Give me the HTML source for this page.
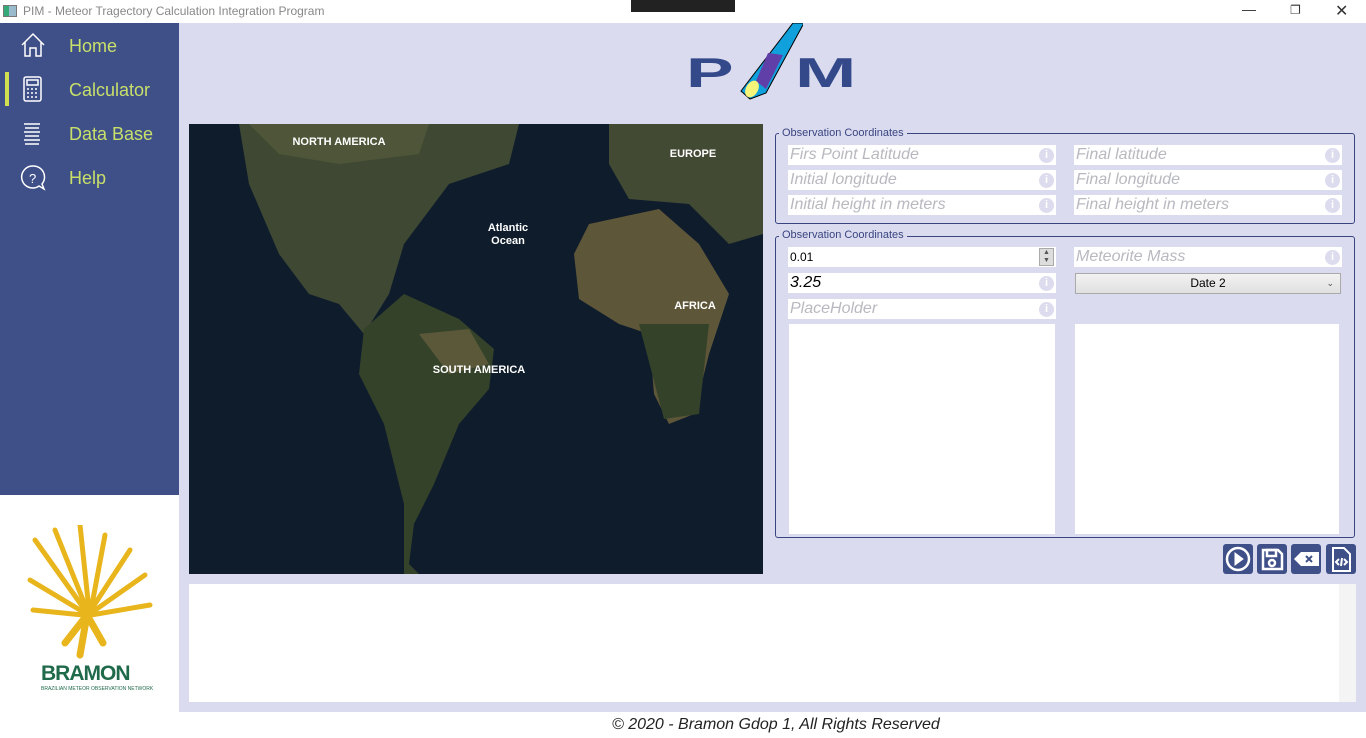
<!DOCTYPE html>
<html><head><meta charset="utf-8"><style>
*{margin:0;padding:0;box-sizing:border-box}
body{width:1366px;height:738px;position:relative;overflow:hidden;background:#dadbef;font-family:"Liberation Sans",sans-serif}
.a{position:absolute}
.nav{left:69px;font-size:18px;color:#c8e06a}
.fs{border:1px solid #3a4580;border-radius:3px}
.lg{font-size:11px;color:#3a4580;background:#dadbef;padding:0 3px}
.in{background:#fff;height:20px;font-style:italic;color:#b8b8c0;font-size:16px;padding-left:2px;line-height:20px}
.i{position:absolute;right:2px;top:3px;width:15px;height:15px;border-radius:50%;background:#dcdcee;color:#fff;font-size:11px;text-align:center;line-height:15px;font-style:normal;font-weight:bold}
.b{width:30px;height:30px;background:#3f4f88;border-radius:3px}
.L{font-size:46px;font-weight:bold;color:#33498a;line-height:46px;transform-origin:left top}
</style></head><body>
<div class="a" style="left:0;top:0;width:1366px;height:23px;background:#fff"></div>
<div class="a" style="left:3px;top:5px;width:14px;height:12px;border:1px solid #777;background:linear-gradient(90deg,#3a7 0 40%,#9bc 40%)"></div>
<div class="a" style="left:23px;top:4px;font-size:12px;color:#888">PIM - Meteor Tragectory Calculation Integration Program</div>
<div class="a" style="left:631px;top:0;width:104px;height:12px;background:#222"></div>
<div class="a" style="left:1242px;top:1px;font-size:14px;color:#333">—</div>
<div class="a" style="left:1290px;top:3px;font-size:12px;color:#333">❐</div>
<div class="a" style="left:1335px;top:1px;font-size:16px;color:#333">✕</div>
<div class="a" style="left:0;top:23px;width:179px;height:472px;background:#3f4f88"></div>
<div class="a" style="left:0;top:495px;width:179px;height:243px;background:#fff"></div>
<div class="a" style="left:5px;top:72px;width:4px;height:34px;background:#d0e050"></div>
<svg class="a" style="left:20px;top:32px" width="26" height="160" fill="none" stroke="#fff" stroke-width="1.5">
<path d="M2 13 L13 2 L24 13 M5 10 V24 H10 V16 H16 V24 H21 V10"/>
<rect x="4" y="45" width="17" height="24" rx="2"/><rect x="7" y="48" width="11" height="5"/><path d="M7 57h2M11 57h2M15 57h2M7 61h2M11 61h2M15 61h2M7 65h2M11 65h2M15 65h2"/>
<path d="M4 92h16M5 96h14M4 100h16M5 104h14M4 108h16M5 112h14"/>
<path d="M13 134a11 11 0 1 0 6 20l5 3-2-5a11 11 0 0 0-9-18z"/><text x="9" y="151" fill="#fff" stroke="none" font-size="13">?</text>
</svg>
<div class="a nav" style="top:36px">Home</div>
<div class="a nav" style="top:80px">Calculator</div>
<div class="a nav" style="top:124px">Data Base</div>
<div class="a nav" style="top:168px">Help</div>
<svg class="a" style="left:25px;top:525px" width="130" height="135" stroke="#e8b51c" stroke-linecap="round">
<g stroke-width="7"><path d="M62 90 L55 130"/><path d="M62 90 L40 118"/><path d="M62 90 L78 118"/></g>
<g stroke-width="5"><path d="M60 85 L10 15"/><path d="M62 85 L30 5"/><path d="M64 85 L55 0"/><path d="M66 85 L80 10"/><path d="M66 85 L105 25"/><path d="M66 88 L120 50"/><path d="M60 88 L5 55"/><path d="M66 90 L125 80"/><path d="M58 90 L8 85"/></g>
</svg>
<div class="a" style="left:41px;top:662px;font-size:21px;font-weight:bold;color:#1f6a4a;letter-spacing:-1px">BRAMON</div>
<div class="a" style="left:41px;top:686px;font-size:5px;color:#1f6a4a">BRAZILIAN METEOR OBSERVATION NETWORK</div>
<!-- logo -->
<div class="a L" style="left:686px;top:52px;transform:scale(1.55,0.9)">P</div>
<div class="a L" style="left:795px;top:52px;transform:scale(1.6,0.9)">M</div>
<svg class="a" style="left:738px;top:23px" width="65" height="78"><path d="M55 0 L66 0 L28 70 L12 76 L3 68 Z" fill="#10a0dc" stroke="#000" stroke-width="1"/><path d="M30 30 L45 32 L28 66 L18 58Z" fill="#6040a8"/><ellipse cx="14" cy="66" rx="9" ry="6" fill="#f5f57a" transform="rotate(-60 14 66)"/></svg>
<!-- map -->
<svg class="a" style="left:189px;top:124px" width="574" height="450">
<rect width="574" height="450" fill="#0f1c2c"/>
<path d="M50 0 H330 L320 40 L260 60 L215 120 L200 170 L175 210 L150 180 L120 170 L90 130 L60 60 Z" fill="#3e4832"/>
<path d="M60 0 H240 L230 30 L150 40 L90 30Z" fill="#4e5538"/>
<path d="M175 205 L215 170 L270 195 L305 225 L300 265 L270 300 L245 360 L225 400 L220 440 L230 450 L215 450 L215 380 L195 300 L170 250 Z" fill="#34422a"/>
<path d="M230 210 L280 205 L300 240 L260 250Z" fill="#5a5838"/>
<path d="M400 100 L470 85 L510 120 L540 170 L520 230 L505 290 L480 300 L465 270 L460 210 L430 200 L390 175 L385 130Z" fill="#5e5638"/>
<path d="M420 0 H574 V110 L540 120 L500 80 L440 75 L420 40Z" fill="#424a34"/>
<path d="M450 200 L520 200 L510 290 L475 295Z" fill="#34422a"/>
<g fill="#fff" font-size="11" font-weight="bold" text-anchor="middle"><text x="150" y="21">NORTH AMERICA</text><text x="504" y="33">EUROPE</text><text x="319" y="107">Atlantic</text><text x="319" y="120">Ocean</text><text x="506" y="185">AFRICA</text><text x="290" y="249">SOUTH AMERICA</text></g>
</svg>
<!-- panel 1 -->
<div class="a fs" style="left:775px;top:133px;width:580px;height:91px"></div>
<div class="a lg" style="left:779px;top:127px">Observation Coordinates</div>
<div class="a in" style="left:788px;top:145px;width:268px">Firs Point Latitude<span class="i">i</span></div>
<div class="a in" style="left:788px;top:170px;width:268px">Initial longitude<span class="i">i</span></div>
<div class="a in" style="left:788px;top:195px;width:268px">Initial height in meters<span class="i">i</span></div>
<div class="a in" style="left:1074px;top:145px;width:268px">Final latitude<span class="i">i</span></div>
<div class="a in" style="left:1074px;top:170px;width:268px">Final longitude<span class="i">i</span></div>
<div class="a in" style="left:1074px;top:195px;width:268px">Final height in meters<span class="i">i</span></div>
<!-- panel 2 -->
<div class="a fs" style="left:775px;top:236px;width:580px;height:302px"></div>
<div class="a lg" style="left:779px;top:229px">Observation Coordinates</div>
<div class="a in" style="left:788px;top:247px;width:268px;font-style:normal;color:#000;font-size:12px">0.01<span class="a" style="right:2px;top:1px;width:15px;height:18px;background:#ddd;border:1px solid #aaa;font-size:7px;line-height:8px;text-align:center;color:#555">▲<br>▼</span></div>
<div class="a in" style="left:788px;top:273px;width:268px;color:#000">3.25<span class="i">i</span></div>
<div class="a in" style="left:788px;top:299px;width:268px">PlaceHolder<span class="i">i</span></div>
<div class="a in" style="left:1074px;top:247px;width:268px">Meteorite Mass<span class="i">i</span></div>
<div class="a" style="left:1075px;top:273px;width:266px;height:21px;background:linear-gradient(#f2f2f2,#e0e0e0);border:1px solid #aaa;font-size:12px;text-align:center;line-height:19px">Date 2<span class="a" style="right:6px;top:0;font-size:9px;color:#555">⌄</span></div>
<div class="a" style="left:789px;top:324px;width:266px;height:210px;background:#fff"></div>
<div class="a" style="left:1075px;top:324px;width:264px;height:210px;background:#fff"></div>
<!-- buttons -->
<div class="a b" style="left:1223px;top:544px"><svg width="30" height="30" fill="none" stroke="#fff" stroke-width="2.5"><circle cx="15" cy="15" r="11"/><path d="M12 9 L20 15 L12 21Z" fill="#fff" stroke-width="1"/></svg></div>
<div class="a b" style="left:1257px;top:544px"><svg width="30" height="30" fill="none" stroke="#fff" stroke-width="2.5"><path d="M6 6 H21 L25 10 V25 H6Z"/><rect x="10" y="6" width="9" height="6"/><circle cx="15" cy="19" r="3"/></svg></div>
<div class="a b" style="left:1291px;top:544px"><svg width="30" height="30"><path d="M3 15 L10 8 H28 V22 H10Z" fill="#fff"/><path d="M15 12 L21 18 M21 12 L15 18" stroke="#3f4f88" stroke-width="2"/></svg></div>
<div class="a b" style="left:1326px;top:544px"><svg width="30" height="30" fill="none" stroke="#fff" stroke-width="2"><path d="M7 4 H18 L24 10 V27 H7Z"/><path d="M13 15 L10 18 L13 21 M18 15 L21 18 L18 21 M16 14 L15 22"/></svg></div>
<!-- output -->
<div class="a" style="left:189px;top:584px;width:1167px;height:118px;background:#fff"></div>
<div class="a" style="left:1339px;top:584px;width:17px;height:118px;background:#f4f4f4"></div>
<div class="a" style="left:179px;top:712px;width:1187px;height:26px;background:#fff"></div>
<div class="a" style="left:612px;top:716px;font-size:16px;font-style:italic;color:#222">© 2020 - Bramon Gdop 1, All Rights Reserved</div>
</body></html>
